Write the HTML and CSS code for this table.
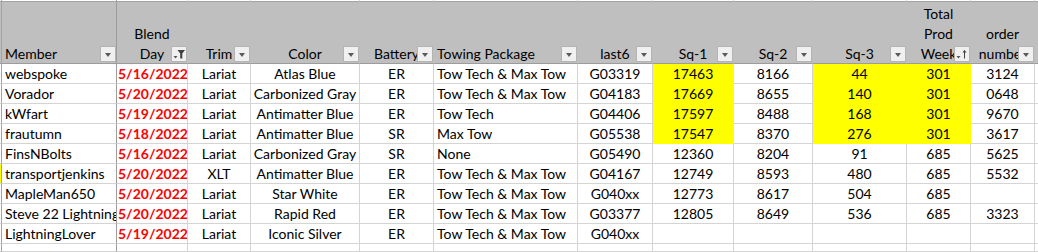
FILE: index.html
```html
<!DOCTYPE html>
<html lang="en">
<head>
<meta charset="utf-8">
<title>Orders sheet</title>
<link rel="stylesheet" href="styles.css">
</head>
<body>
<div class="sheet">
  <!-- partial row above the header -->
  <div class="c top edge"></div>
  <div class="c top fz"></div>
  <div class="c top"></div><div class="c top"></div><div class="c top"></div><div class="c top"></div>
  <div class="c top"></div><div class="c top"></div><div class="c top"></div><div class="c top"></div>
  <div class="c top"></div><div class="c top"></div><div class="c top"></div><div class="c top last"></div>

  <!-- header row -->
  <div class="c h edge"></div>
  <div class="c h fz"><span class="ht">Member</span><span class="fb"><i class="tri"></i></span></div>
  <div class="c h ct"><span class="ht">Blend<br>Day</span><span class="fb"><svg width="14" height="14" viewBox="0 0 14 14"><polygon points="1.5,9 5.5,9 3.5,11.5" fill="#555"/><polygon points="5.5,3 13,3 10.3,6.5 10.3,11.5 8.2,11.5 8.2,6.5" fill="#404040"/></svg></span></div>
  <div class="c h ct"><span class="ht">Trim</span><span class="fb"><i class="tri"></i></span></div>
  <div class="c h ct"><span class="ht">Color</span><span class="fb"><i class="tri"></i></span></div>
  <div class="c h ct"><span class="ht">Battery</span><span class="fb"><i class="tri"></i></span></div>
  <div class="c h"><span class="ht">Towing Package</span><span class="fb"><i class="tri"></i></span></div>
  <div class="c h ct"><span class="ht">last6</span><span class="fb"><i class="tri"></i></span></div>
  <div class="c h ct"><span class="ht">Sq-1</span><span class="fb"><i class="tri"></i></span></div>
  <div class="c h ct"><span class="ht">Sq-2</span><span class="fb"><i class="tri"></i></span></div>
  <div class="c h ct"><span class="ht">Sq-3</span><span class="fb"><i class="tri"></i></span></div>
  <div class="c h ct"><span class="ht">Total<br>Prod<br>Week</span><span class="fb"><svg width="14" height="14" viewBox="0 0 14 14"><polygon points="1.5,9 5.5,9 3.5,11.5" fill="#555"/><line x1="9.5" y1="3.5" x2="9.5" y2="11.5" stroke="#404040" stroke-width="1"/><polygon points="7.5,5.5 11.5,5.5 9.5,3" fill="#404040"/></svg></span></div>
  <div class="c h ct"><span class="ht">order<br>number</span><span class="fb"><i class="tri"></i></span></div>
  <div class="c h last"></div>

  <!-- row 1 -->
  <div class="c edge"></div>
  <div class="c fz">webspoke</div>
  <div class="c ct d">5/16/2022</div>
  <div class="c ct">Lariat</div>
  <div class="c ct">Atlas Blue</div>
  <div class="c ct">ER</div>
  <div class="c">Tow Tech &amp; Max Tow</div>
  <div class="c ct">G03319</div>
  <div class="c ct y">17463</div>
  <div class="c ct">8166</div>
  <div class="c ct y">44</div>
  <div class="c ct y">301</div>
  <div class="c ct">3124</div>
  <div class="c last"></div>

  <!-- row 2 -->
  <div class="c edge"></div>
  <div class="c fz">Vorador</div>
  <div class="c ct d">5/20/2022</div>
  <div class="c ct">Lariat</div>
  <div class="c ct">Carbonized Gray</div>
  <div class="c ct">ER</div>
  <div class="c">Tow Tech &amp; Max Tow</div>
  <div class="c ct">G04183</div>
  <div class="c ct y">17669</div>
  <div class="c ct">8655</div>
  <div class="c ct y">140</div>
  <div class="c ct y">301</div>
  <div class="c ct">0648</div>
  <div class="c last"></div>

  <!-- row 3 -->
  <div class="c edge"></div>
  <div class="c fz">kWfart</div>
  <div class="c ct d">5/19/2022</div>
  <div class="c ct">Lariat</div>
  <div class="c ct">Antimatter Blue</div>
  <div class="c ct">ER</div>
  <div class="c">Tow Tech</div>
  <div class="c ct">G04406</div>
  <div class="c ct y">17597</div>
  <div class="c ct">8488</div>
  <div class="c ct y">168</div>
  <div class="c ct y">301</div>
  <div class="c ct">9670</div>
  <div class="c last"></div>

  <!-- row 4 -->
  <div class="c edge"></div>
  <div class="c fz">frautumn</div>
  <div class="c ct d">5/18/2022</div>
  <div class="c ct">Lariat</div>
  <div class="c ct">Antimatter Blue</div>
  <div class="c ct">SR</div>
  <div class="c">Max Tow</div>
  <div class="c ct">G05538</div>
  <div class="c ct y">17547</div>
  <div class="c ct">8370</div>
  <div class="c ct y">276</div>
  <div class="c ct y">301</div>
  <div class="c ct">3617</div>
  <div class="c last"></div>

  <!-- row 5 -->
  <div class="c edge"></div>
  <div class="c fz">FinsNBolts</div>
  <div class="c ct d">5/16/2022</div>
  <div class="c ct">Lariat</div>
  <div class="c ct">Carbonized Gray</div>
  <div class="c ct">SR</div>
  <div class="c">None</div>
  <div class="c ct">G05490</div>
  <div class="c ct">12360</div>
  <div class="c ct">8204</div>
  <div class="c ct">91</div>
  <div class="c ct">685</div>
  <div class="c ct">5625</div>
  <div class="c last"></div>

  <!-- row 6 -->
  <div class="c edge mark"></div>
  <div class="c fz">transportjenkins</div>
  <div class="c ct d">5/20/2022</div>
  <div class="c ct">XLT</div>
  <div class="c ct">Antimatter Blue</div>
  <div class="c ct">ER</div>
  <div class="c">Tow Tech &amp; Max Tow</div>
  <div class="c ct">G04167</div>
  <div class="c ct">12749</div>
  <div class="c ct">8593</div>
  <div class="c ct">480</div>
  <div class="c ct">685</div>
  <div class="c ct">5532</div>
  <div class="c last"></div>

  <!-- row 7 -->
  <div class="c edge"></div>
  <div class="c fz">MapleMan650</div>
  <div class="c ct d">5/20/2022</div>
  <div class="c ct">Lariat</div>
  <div class="c ct">Star White</div>
  <div class="c ct">ER</div>
  <div class="c">Tow Tech &amp; Max Tow</div>
  <div class="c ct">G040xx</div>
  <div class="c ct">12773</div>
  <div class="c ct">8617</div>
  <div class="c ct">504</div>
  <div class="c ct">685</div>
  <div class="c ct"></div>
  <div class="c last"></div>

  <!-- row 8 -->
  <div class="c edge"></div>
  <div class="c fz">Steve 22 Lightning</div>
  <div class="c ct d">5/20/2022</div>
  <div class="c ct">Lariat</div>
  <div class="c ct">Rapid Red</div>
  <div class="c ct">ER</div>
  <div class="c">Tow Tech &amp; Max Tow</div>
  <div class="c ct">G03377</div>
  <div class="c ct">12805</div>
  <div class="c ct">8649</div>
  <div class="c ct">536</div>
  <div class="c ct">685</div>
  <div class="c ct">3323</div>
  <div class="c last"></div>

  <!-- row 9 -->
  <div class="c edge"></div>
  <div class="c fz">LightningLover</div>
  <div class="c ct d">5/19/2022</div>
  <div class="c ct">Lariat</div>
  <div class="c ct">Iconic Silver</div>
  <div class="c ct">ER</div>
  <div class="c">Tow Tech &amp; Max Tow</div>
  <div class="c ct">G040xx</div>
  <div class="c ct"></div>
  <div class="c ct"></div>
  <div class="c ct"></div>
  <div class="c ct"></div>
  <div class="c ct"></div>
  <div class="c last"></div>

  <!-- empty row -->
  <div class="c edge"></div>
  <div class="c fz"></div>
  <div class="c"></div><div class="c"></div><div class="c"></div><div class="c"></div>
  <div class="c"></div><div class="c"></div><div class="c"></div><div class="c"></div>
  <div class="c"></div><div class="c"></div><div class="c"></div><div class="c last"></div>
</div>
</body>
</html>
```

FILE: styles.css
```css
html, body {
  margin: 0;
  background: #ffffff;
}

body {
  font-family: "Lato", "Liberation Sans", sans-serif;
  font-size: 14px;
  color: #000000;
}

.sheet {
  display: grid;
  grid-template-columns: 2px 115px 71px 63px 109px 74px 144px 75px 81px 79px 94px 64px 64px 1fr;
  grid-template-rows: 2px 62px repeat(9, 20px) 1fr;
  width: 1038px;
  height: 252px;
  overflow: hidden;
}

.c {
  box-sizing: border-box;
  border-right: 1px solid #d4d4d4;
  border-bottom: 1px solid #d4d4d4;
  white-space: nowrap;
  overflow: hidden;
  line-height: 19px;
  padding: 0 3px;
}

.ct {
  text-align: center;
  padding: 0 1px;
}

.last {
  border-right: none;
}

.edge {
  padding: 0;
  border-right-color: #a3a3a3;
}

.edge.mark {
  background: #ffff00;
}

.fz {
  border-right-color: #9c9c9c;
}

.top {
  border-bottom-color: #a3a3a3;
}

.top.edge {
  border-right-color: #a3a3a3;
}

.d {
  color: #ff0000;
  font-weight: bold;
}

.y {
  background: #ffff00;
  border-right-color: #ffff00;
  border-bottom-color: #ffff00;
}

/* header */
.h {
  position: relative;
  display: flex;
  flex-direction: column;
  justify-content: flex-end;
  background: #bfbfbf;
  border-right-color: #bfbfbf;
  border-bottom-color: #9c9c9c;
  line-height: 20px;
  overflow: visible;
}

.h.fz {
  border-right-color: #9c9c9c;
}

.h.edge {
  border-right-color: #a3a3a3;
}

.ht {
  display: block;
  margin-bottom: -1px;
}

.fb {
  position: absolute;
  right: 0;
  bottom: 1px;
  width: 16px;
  height: 16px;
  box-sizing: border-box;
  border: 1px solid #b4b4b4;
  background: #f0f0f0;
  display: flex;
  align-items: center;
  justify-content: center;
}

.fb svg {
  display: block;
}

.tri {
  display: block;
  width: 0;
  height: 0;
  margin-top: 2px;
  border-left: 3.5px solid transparent;
  border-right: 3.5px solid transparent;
  border-top: 4px solid #5a5a5a;
}
```
